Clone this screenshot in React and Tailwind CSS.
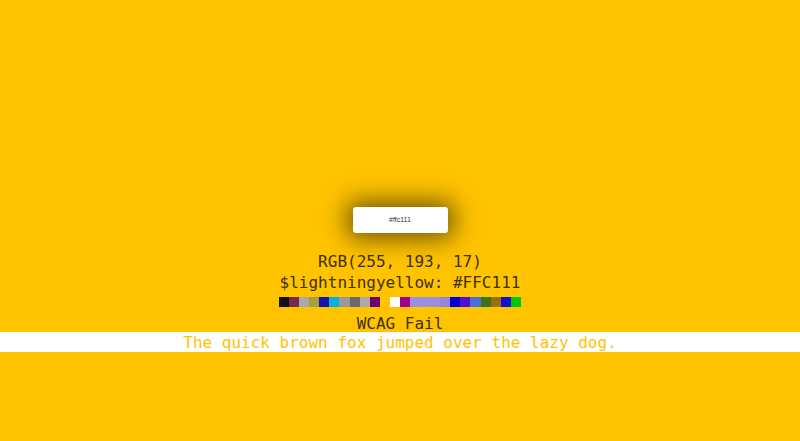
import React from 'react';

const swatches = [
  '#111111', '#7a2a4a', '#aaaaaa', '#a8a040', '#1414a8', '#00b2e2', '#999999', '#6a6a6a', '#aaaaaa', '#700070',
  '#ffc300', '#ffffff', '#a0008c', '#9a90e0', '#9a90e0', '#9a8fd8', '#9485d8', '#0000d6', '#5010d0', '#4a70d8',
  '#407014', '#9a7010', '#1010d0', '#00c800',
];

export default function App() {
  return (
    <div className="h-[441px] w-full bg-[#ffc300] flex flex-col items-center pt-[207px] overflow-hidden font-['DejaVu_Sans_Mono',monospace]">
      {/* color chip */}
      <div className="w-[95px] h-[26px] bg-white rounded-[3px] shadow-[0_0_24px_6px_rgba(0,0,0,0.55)] flex items-center justify-center">
        <span className="text-[7px] text-[#333] font-['Liberation_Sans',sans-serif]">#ffc111</span>
      </div>

      <div className="mt-[18px] text-[16px] leading-[21px] text-[#3d3100] text-center">
        <p>RGB(255, 193, 17)</p>
        <p>$lightningyellow: #FFC111</p>
      </div>

      <div className="mt-[4px] flex w-[242px] h-[10px]">
        {swatches.map((c, i) => (
          <div key={i} className="flex-1 h-full" style={{ backgroundColor: c }} />
        ))}
      </div>

      <p className="mt-[6px] text-[16px] leading-[19px] text-[#3d3100] translate-y-[1px]">WCAG Fail</p>
      <div className="w-full bg-white h-[20px] flex items-center justify-center">
        <p className="text-[16px] leading-[20px] text-[#ffc300] translate-y-[1px]">The quick brown fox jumped over the lazy dog.</p>
      </div>
    </div>
  );
}
